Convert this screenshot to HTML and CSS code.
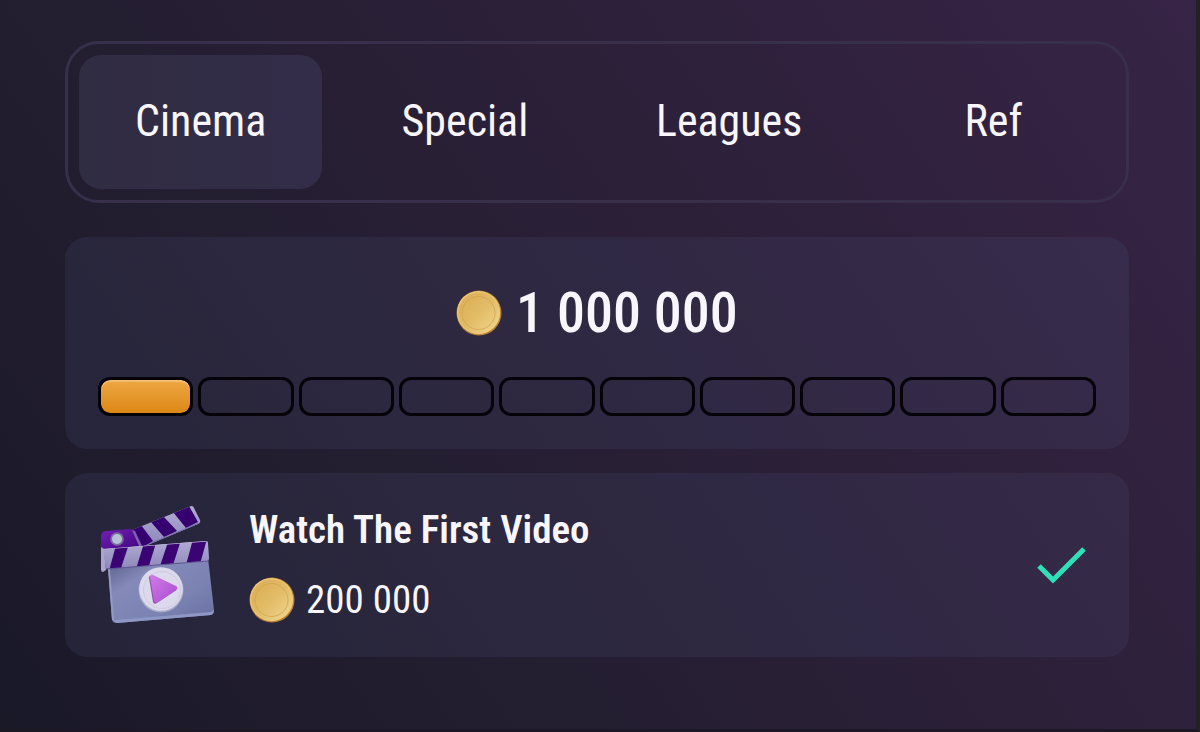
FILE: index.html
```html
<!DOCTYPE html>
<html lang="en">
<head>
    <meta charset="UTF-8">
    <meta name="viewport" content="width=device-width, initial-scale=1.0">
    <title>Cinema tasks</title>
    <link rel="stylesheet" href="styles.css">
</head>
<body>
    <svg class="defs" width="0" height="0" aria-hidden="true">
        <defs>
            <linearGradient id="coinFace" x1="0" y1="0" x2="1" y2="1">
                <stop offset="0" stop-color="#dcab55"/>
                <stop offset="0.5" stop-color="#e2bb66"/>
                <stop offset="1" stop-color="#f2da92"/>
            </linearGradient>
            <symbol id="coin" viewBox="0 0 46 46">
                <circle cx="23" cy="23" r="22.5" fill="#b98238"/>
                <circle cx="22.6" cy="22.6" r="21.6" fill="#edcb7c"/>
                <circle cx="22.8" cy="22.8" r="20.6" fill="url(#coinFace)"/>
                <circle cx="22.5" cy="23" r="16.5" fill="none" stroke="#d0a352" stroke-width="0.8"/>
            </symbol>
        </defs>
    </svg>

    <main class="page">
        <nav class="tabs">
            <button class="tab active" type="button">Cinema</button>
            <button class="tab" type="button">Special</button>
            <button class="tab" type="button">Leagues</button>
            <button class="tab" type="button">Ref</button>
        </nav>

        <section class="card goal">
            <div class="goal-total">
                <svg class="coin" aria-hidden="true"><use href="#coin"/></svg>
                <span>1 000 000</span>
            </div>
            <div class="steps">
                <span class="step done"></span>
                <span class="step"></span>
                <span class="step"></span>
                <span class="step"></span>
                <span class="step"></span>
                <span class="step"></span>
                <span class="step"></span>
                <span class="step"></span>
                <span class="step"></span>
                <span class="step"></span>
            </div>
        </section>

        <section class="card task">
            <svg class="clapper" viewBox="0 0 120 120" aria-hidden="true">
                <defs>
                    <linearGradient id="board" x1="0" y1="0" x2="1" y2="1">
                        <stop offset="0" stop-color="#565a85"/>
                        <stop offset="0.3" stop-color="#8489b8"/>
                        <stop offset="0.65" stop-color="#7b83b3"/>
                        <stop offset="1" stop-color="#686fa0"/>
                    </linearGradient>
                    <linearGradient id="bar" x1="0" y1="0" x2="0" y2="1">
                        <stop offset="0" stop-color="#b3add4"/>
                        <stop offset="1" stop-color="#8984b8"/>
                    </linearGradient>
                    <linearGradient id="hinge" x1="0" y1="0" x2="1" y2="1">
                        <stop offset="0" stop-color="#7420b4"/>
                        <stop offset="1" stop-color="#3f0580"/>
                    </linearGradient>
                    <linearGradient id="play" x1="0" y1="0" x2="1" y2="1">
                        <stop offset="0" stop-color="#d27be8"/>
                        <stop offset="1" stop-color="#a94bd0"/>
                    </linearGradient>
                    <clipPath id="armClip"><path d="M33 25 91 1.5Q94 0 95 3L101 15Q102 18 99 19L44 42 41 41Z"/></clipPath>
                    <clipPath id="barClip"><path d="M4 44 106 36Q109 36 109 38L110 53Q110 56 108 56L7 64Z"/></clipPath>
                </defs>
                <path d="M9 62 109 53 115 105Q115 109 112 110L18 118Q14 118 13 115Z" fill="url(#board)"/>
                <path d="M14 116 18 118 112 110Q115 109 115 105L112 107 16 115Z" fill="#8f97c4"/>
                <path d="M9 64 13 115 15 115 11 64Z" fill="#939ac4"/>
                <g clip-path="url(#armClip)">
                    <path d="M30 0H110V45H30Z" fill="url(#bar)"/>
                    <path d="M32 24 42 20 54 36 43 43ZM52 17 64 11 78 26 65 32ZM74 7 90 1 99 17 87 23Z" fill="#370071"/>
                    <path d="M44 42 101 18" stroke="#7671ac" stroke-width="1.6"/>
                </g>
                <path d="M2 32Q2 26 7 26L31 24Q34 24 36 28L42 41 2 45Z" fill="url(#hinge)"/>
                <path d="M33 25 36 26 43 41 40 41Z" fill="#8260ae"/>
                <circle cx="18" cy="34" r="6.8" fill="#7d6ba0"/>
                <circle cx="18" cy="34" r="5" fill="#b4c4d4"/>
                <path d="M2 42 5 44 7 65 4 67Q2 67 2 64Z" fill="#aaa5ce"/>
                <g clip-path="url(#barClip)">
                    <path d="M0 34H115V68H0Z" fill="url(#bar)"/>
                    <path d="M17 40 30 39 23 60 22 66 10 66ZM45 38 57 38 49 64 37 64ZM69 37 82 35 74 60 61 61ZM94 34 108 34 101 59 87 60Z" fill="#3a0472"/>
                    <path d="M4 44 109 36" stroke="#c0b8df" stroke-width="1"/>
                </g>
                <path d="M7 64 109 56" stroke="#5d5592" stroke-width="1.2"/>
                <circle cx="62" cy="85" r="22.5" fill="#a9abc8"/>
                <circle cx="62" cy="84" r="21.8" fill="#dcd9ec"/>
                <circle cx="63" cy="85" r="18.5" fill="none" stroke="#c9c5df" stroke-width="0.8"/>
                <path d="M51 72Q51 69 54 70L77 81Q80 83 77 85L59 97Q56 99 55 96Z" fill="#8c54a8" transform="translate(-1 1)"/>
                <path d="M51 72Q51 69 54 70L77 81Q80 83 77 85L59 97Q56 99 55 96Z" fill="url(#play)"/>
            </svg>
            <div class="task-info">
                <h2 class="task-title">Watch The First Video</h2>
                <div class="task-reward">
                    <svg class="coin" aria-hidden="true"><use href="#coin"/></svg>
                    <span>200 000</span>
                </div>
            </div>
            <svg class="check" viewBox="0 0 50 38" role="img" aria-label="Done">
                <path d="M2 20 16 34 47 3" fill="none" stroke="#2fdfb8" stroke-width="5"/>
            </svg>
        </section>
    </main>
</body>
</html>
```
FILE: styles.css
```css
:root {
    --text-color: #f8f5fb;
    --card-color: rgba(75, 80, 118, 0.2);
}

* {
    box-sizing: border-box;
}

body {
    margin: 0;
    min-height: 100vh;
    font-family: "Roboto Condensed", "Liberation Sans Narrow", Roboto, sans-serif;
    color: var(--text-color);
    background: linear-gradient(55deg, #1a1928 0%, #241e31 35%, #2c2039 62%, #372446 100%);
    border-right: 4px solid #222222;
    border-bottom: 3px solid #1c1924;
}

.defs {
    position: absolute;
}

.page {
    padding: 41px 67px 72px 65px;
}

.tabs {
    display: grid;
    grid-template-columns: repeat(4, 1fr);
    gap: 21px;
    padding: 11px;
    border: 3px solid #382f4a;
    border-radius: 34px;
}

.tab {
    height: 134px;
    padding: 0 0 2px;
    border: none;
    border-radius: 22px;
    background: none;
    color: inherit;
    font-family: inherit;
    font-size: 44px;
    cursor: pointer;
}

.tab.active {
    background: linear-gradient(90deg, #302c42, #332d49);
}

.card {
    border-radius: 22px;
    background: var(--card-color);
}

.goal {
    margin-top: 34px;
    padding: 44px 33px 33px;
}

.goal-total {
    display: flex;
    align-items: center;
    justify-content: center;
    gap: 14px;
    font-size: 56px;
    font-weight: 500;
    line-height: 64px;
}

.coin {
    flex: none;
    width: 46px;
    height: 46px;
}

.steps {
    display: grid;
    grid-template-columns: repeat(10, 1fr);
    gap: 5px;
    margin-top: 32px;
}

.step {
    height: 39px;
    border: 3px solid #050308;
    border-radius: 12px;
}

.step.done {
    background: linear-gradient(#eda744, #dc8815) padding-box;
    box-shadow: inset 0 2px 1px #f3bf70;
}

.task {
    display: flex;
    align-items: center;
    margin-top: 24px;
    padding: 32px 42px 32px 34px;
}

.clapper {
    flex: none;
    width: 120px;
    height: 120px;
}

.task-info {
    flex: 1;
    margin-left: 30px;
}

.task-title {
    margin: 0;
    font-size: 39px;
    font-weight: 600;
    line-height: 48px;
}

.task-reward {
    display: flex;
    align-items: center;
    gap: 11px;
    margin-top: 22px;
    font-size: 39px;
    line-height: 48px;
}

.check {
    flex: none;
    width: 50px;
    height: 38px;
}
```
